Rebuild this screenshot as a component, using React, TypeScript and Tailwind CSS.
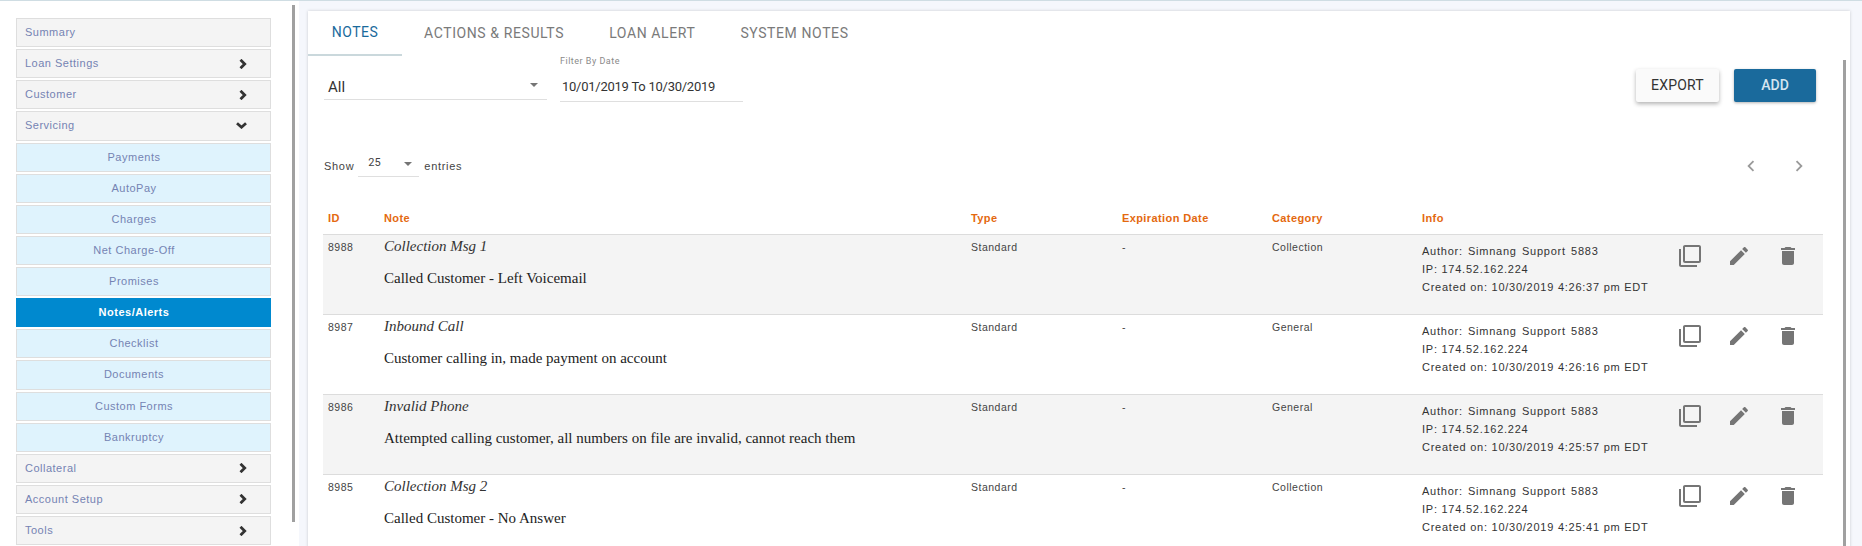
const sans = "font-['Liberation_Sans',Arial,sans-serif]";
const roboto = "font-['Roboto',Arial,sans-serif]";

const nav: { t: string; k: "top" | "sub" | "active"; icon?: "r" | "d" }[] = [
  { t: "Summary", k: "top" },
  { t: "Loan Settings", k: "top", icon: "r" },
  { t: "Customer", k: "top", icon: "r" },
  { t: "Servicing", k: "top", icon: "d" },
  { t: "Payments", k: "sub" },
  { t: "AutoPay", k: "sub" },
  { t: "Charges", k: "sub" },
  { t: "Net Charge-Off", k: "sub" },
  { t: "Promises", k: "sub" },
  { t: "Notes/Alerts", k: "active" },
  { t: "Checklist", k: "sub" },
  { t: "Documents", k: "sub" },
  { t: "Custom Forms", k: "sub" },
  { t: "Bankruptcy", k: "sub" },
  { t: "Collateral", k: "top", icon: "r" },
  { t: "Account Setup", k: "top", icon: "r" },
  { t: "Tools", k: "top", icon: "r" },
];

const rows = [
  { id: "8988", title: "Collection Msg 1", body: "Called Customer - Left Voicemail", cat: "Collection", time: "4:26:37 pm" },
  { id: "8987", title: "Inbound Call", body: "Customer calling in, made payment on account", cat: "General", time: "4:26:16 pm" },
  { id: "8986", title: "Invalid Phone", body: "Attempted calling customer, all numbers on file are invalid, cannot reach them", cat: "General", time: "4:25:57 pm" },
  { id: "8985", title: "Collection Msg 2", body: "Called Customer - No Answer", cat: "Collection", time: "4:25:41 pm" },
];

const grid = "grid grid-cols-[56px_587px_151px_150px_150px_256px_1fr]";
const cell = "pt-[4px] text-[10.5px] leading-[16px] tracking-[0.5px] text-[#444]";

function Caret({ className }: { className: string }) {
  return <span className={`block h-0 w-0 border-x-[4px] border-t-[4px] border-x-transparent border-t-[#757575] ${className}`} />;
}

function Icon({ d }: { d: string }) {
  return (
    <svg viewBox="0 0 24 24" width="24" height="24" fill="#757575" className="shrink-0">
      <path d={d} />
    </svg>
  );
}

function ChevRight() {
  return (
    <svg viewBox="0 0 8 10" width="8" height="10" fill="none" stroke="#333" strokeWidth="2.8">
      <path d="M1.5 .8 5.7 5 1.5 9.2" />
    </svg>
  );
}

function ChevDown() {
  return (
    <svg viewBox="0 0 11 7" width="11" height="7" fill="none" stroke="#333" strokeWidth="2.8">
      <path d="M1 1.2 5.5 5.2 10 1.2" />
    </svg>
  );
}

export default function App() {
  return (
    <div className={`flex h-[546px] w-[1862px] overflow-hidden border-t border-[#cfdde3] bg-white ${sans}`}>
      <aside className="flex w-[299px] shrink-0 bg-white">
        <nav className="ml-4 mt-[17px] flex w-[255px] shrink-0 flex-col gap-[2px]">
          {nav.map((n) => (
            <div
              key={n.t}
              className={`flex h-[29.125px] shrink-0 items-center border text-[11px] leading-none tracking-[0.5px] ${
                n.k === "top"
                  ? "justify-between border-[#dedede] bg-[#f4f4f4] pl-2 pr-[23px] text-[#7583b3]"
                  : n.k === "sub"
                    ? "justify-center border-[#dedede] bg-[#dff3fd] pr-[19px] text-[#7583b3]"
                    : "justify-center border-[#0089cf] bg-[#0089cf] pr-[19px] font-bold text-white"
              }`}
            >
              <span>{n.t}</span>
              {n.icon === "r" && <ChevRight />}
              {n.icon === "d" && <ChevDown />}
            </div>
          ))}
        </nav>
        <div className="ml-[21px] mt-[4px] h-[517px] w-[3px] bg-[#a0a0a0]" />
      </aside>

      <main className="flex min-w-0 flex-1 bg-[#f5f7fc] pl-[9px] pt-[10px]">
        <section className="relative h-[600px] w-[1542px] shrink-0 bg-white shadow-[0_0_3px_rgba(0,0,0,0.18)]">
          <div className={`flex h-[45px] ${roboto}`}>
            <div className="flex w-[94px] items-center justify-center border-b-2 border-[#cad8dc] text-[14px] tracking-[0.5px] text-[#1a6a9c]">NOTES</div>
            <div className="ml-[22px] flex items-center gap-[45px] text-[14px] tracking-[0.6px] text-[#7a7a7a]">
              <span>ACTIONS &amp; RESULTS</span>
              <span>LOAN ALERT</span>
              <span>SYSTEM NOTES</span>
            </div>
          </div>

          <div className={`ml-4 mt-[-1px] flex h-[46px] items-start ${roboto}`}>
            <div className="mt-[18px] flex h-[27px] w-[223px] items-center justify-between border-b border-[#dfdfdf] pl-1 pr-[9px] pt-[2px] text-[15px] text-[#333]">
              <span>All</span>
              <Caret className="mb-[4px]" />
            </div>
            <div className="ml-[13px] w-[183px]">
              <div className="text-[9px] leading-[12px] tracking-[0.5px] text-[#8a8a8a]">Filter By Date</div>
              <div className="mt-[10px] h-[25px] whitespace-nowrap border-b border-[#dfdfdf] pl-[2px] text-[13px] leading-[20px] tracking-[-0.25px] text-[#333]">10/01/2019 To 10/30/2019</div>
            </div>
            <div className="ml-auto mr-[34px] mt-[14px] flex gap-[15px]">
              <button className="h-[33px] w-[83px] rounded-[2px] bg-[#fafafa] text-[14px] tracking-[0.2px] text-[#333] shadow-[0_2px_4px_rgba(0,0,0,0.3)]">EXPORT</button>
              <button className="h-[33px] w-[82px] rounded-[2px] bg-[#1a6a9c] text-[14px] font-medium text-[#d5e5f0] shadow-[0_1px_3px_rgba(0,0,0,0.3)]">ADD</button>
            </div>
          </div>

          <div className="ml-4 mr-[40px] mt-[53px] flex h-[23px] items-center text-[11px] tracking-[0.7px] text-[#444]">
            <span className="pt-[1px]">Show</span>
            <div className={`ml-[4px] flex h-[23px] w-[61px] items-center justify-between border-b border-[#dfdfdf] pb-[3px] pl-[10px] pr-[7px] text-[11px] tracking-normal ${roboto}`}>
              <span>25</span>
              <Caret className="" />
            </div>
            <span className="ml-[5px] pt-[1px]">entries</span>
            <div className="ml-auto flex items-center gap-[26px] text-[#9a9a9a]">
              <svg viewBox="0 0 24 24" width="22" height="22" fill="currentColor"><path d="M15.41 7.41L14 6l-6 6 6 6 1.41-1.41L10.83 12z" /></svg>
              <svg viewBox="0 0 24 24" width="22" height="22" fill="currentColor"><path d="M10 6L8.59 7.41 13.17 12l-4.58 4.59L10 18l6-6z" /></svg>
            </div>
          </div>

          <div className="ml-[15px] w-[1500px]">
            <div className={`${grid} mt-[33px] h-[25px] border-b border-[#dcdcdc] pl-[5px] text-[11px] font-bold leading-[16px] tracking-[0.4px] text-[#e4690f]`}>
              <span>ID</span>
              <span>Note</span>
              <span>Type</span>
              <span>Expiration Date</span>
              <span>Category</span>
              <span>Info</span>
              <span />
            </div>
            {rows.map((r, i) => (
              <div key={r.id} className={`${grid} h-[80px] border-b border-[#dcdcdc] pl-[5px] ${i % 2 === 0 ? "bg-[#f4f4f4]" : "bg-white"}`}>
                <span className={cell}>{r.id}</span>
                <div className="font-['Liberation_Serif','Times_New_Roman',serif] text-[15px] text-[#222]">
                  <div className="pt-[1px] italic leading-[20px] text-[#333]">{r.title}</div>
                  <div className="mt-3 leading-[20px]">{r.body}</div>
                </div>
                <span className={cell}>Standard</span>
                <span className={cell}>-</span>
                <span className={cell}>{r.cat}</span>
                <div className="pt-[7px] text-[11px] leading-[18px] tracking-[0.75px] text-[#333]">
                  <div className="[word-spacing:1.5px]">Author: Simnang Support 5883</div>
                  <div>IP: 174.52.162.224</div>
                  <div>Created on: 10/30/2019 {r.time} EDT</div>
                </div>
                <div className="flex gap-[25px] pt-[9px]">
                  <Icon d="M3 5H1v16c0 1.1.9 2 2 2h16v-2H3V5zm18-4H7c-1.1 0-2 .9-2 2v14c0 1.1.9 2 2 2h14c1.1 0 2-.9 2-2V3c0-1.1-.9-2-2-2zm0 16H7V3h14v14z" />
                  <Icon d="M3 17.25V21h3.75L17.81 9.94l-3.75-3.75L3 17.25zM20.71 7.04c.39-.39.39-1.02 0-1.41l-2.34-2.34c-.39-.39-1.02-.39-1.41 0l-1.83 1.83 3.75 3.75 1.83-1.83z" />
                  <Icon d="M6 19c0 1.1.9 2 2 2h8c1.1 0 2-.9 2-2V7H6v12zM19 4h-3.5l-1-1h-5l-1 1H5v2h14V4z" />
                </div>
              </div>
            ))}
          </div>

          <div className="absolute right-[4px] top-[49px] h-[560px] w-[3px] bg-[#a0a0a0]" />
        </section>
      </main>
    </div>
  );
}
